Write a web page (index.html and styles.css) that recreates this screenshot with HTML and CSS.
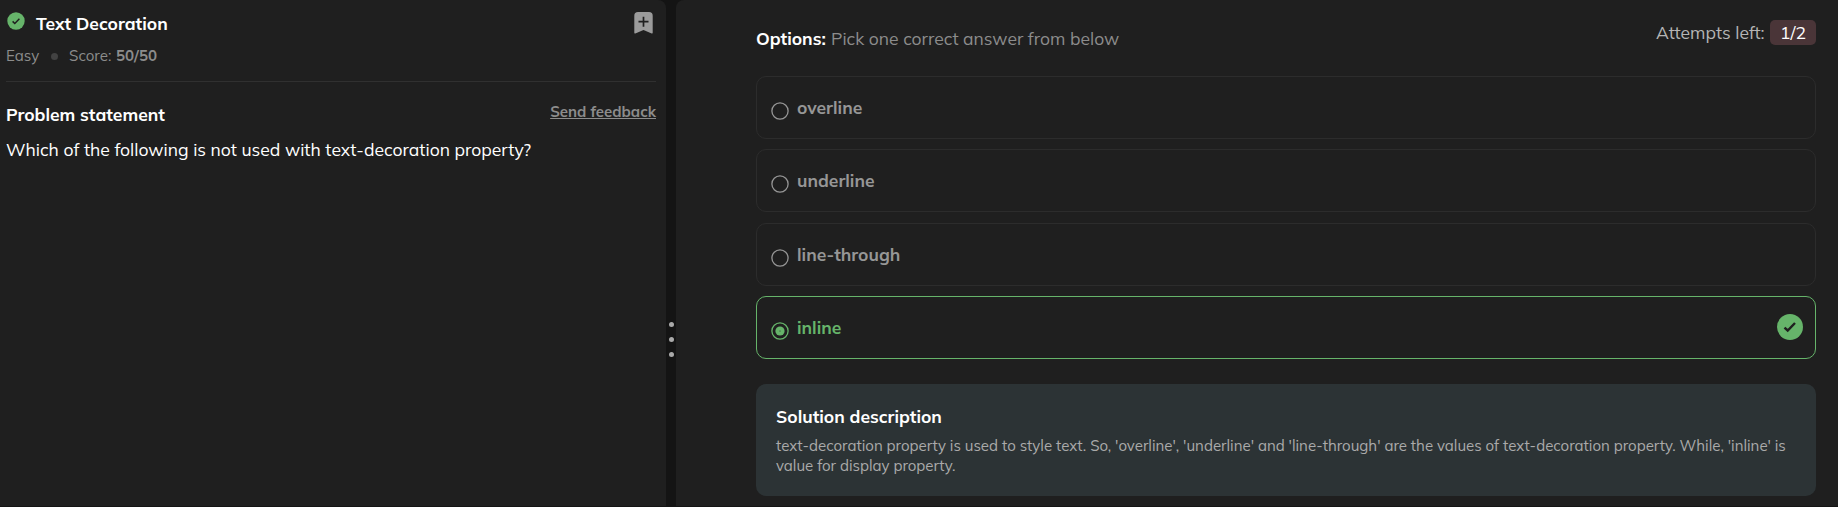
FILE: index.html
```html
<!DOCTYPE html>
<html lang="en">
<head>
<meta charset="utf-8">
<title>Text Decoration</title>
<link rel="stylesheet" href="styles.css">
</head>
<body>
<main class="workspace">
  <section class="problem">
    <header class="problem-head">
      <svg class="solved" viewBox="0 0 18 18"><circle cx="9" cy="9" r="8.7"/><path d="M5.6 9.4l2.2 2.1 4.6-4.7"/></svg>
      <h1 class="title">Text Decoration</h1>
      <svg class="bookmark" viewBox="0 0 19 22"><path class="shape" d="M4 0h11A3.700 3.700 0 0 1 18.700 3.700V20.800q0 1-1 .6L9.500 18 1.300 21.400Q.3 21.800 .3 20.800V3.700A3.700 3.700 0 0 1 4 0z"/><path class="plus" d="M9.500 4.700v10M4.500 9.700h10"/></svg>
    </header>
    <div class="meta"><span class="level">Easy</span><i class="dot"></i><span class="score">Score:</span><b>50/50</b></div>
    <div class="statement-head">
      <h2 class="heading">Problem statement</h2>
      <a class="feedback">Send feedback</a>
    </div>
    <p class="question">Which of the following is not used with text-decoration property?</p>
  </section>
  <div class="splitter"><i></i><i></i><i></i></div>
  <section class="answers">
    <header class="answers-head">
      <div class="prompt"><b class="prompt-label">Options:</b><span class="prompt-hint">Pick one correct answer from below</span></div>
      <div class="attempts"><span class="attempts-label">Attempts left:</span><span class="badge">1/2</span></div>
    </header>
    <div class="options">
      <div class="option"><svg class="radio" viewBox="0 0 18 18"><circle cx="9" cy="9" r="8.100"/></svg><span>overline</span></div>
      <div class="option"><svg class="radio" viewBox="0 0 18 18"><circle cx="9" cy="9" r="8.100"/></svg><span>underline</span></div>
      <div class="option"><svg class="radio" viewBox="0 0 18 18"><circle cx="9" cy="9" r="8.100"/></svg><span>line-through</span></div>
      <div class="option correct"><svg class="radio" viewBox="0 0 18 18"><circle cx="9" cy="9" r="8.100"/><circle class="fill" cx="9" cy="9" r="4.600"/><circle class="pin" cx="9" cy="9" r=".5"/></svg><span>inline</span><svg class="tick" viewBox="0 0 26 26"><circle cx="13" cy="13" r="13"/><path d="M7.500 13.600l3.200 2.900 7.300-7.500"/></svg></div>
    </div>
    <article class="solution">
      <h2 class="heading">Solution description</h2>
      <p class="explain">text-decoration property is used to style text. So, 'overline', 'underline' and 'line-through' are the values of text-decoration property. While, 'inline' is<br>value for display property.</p>
    </article>
  </section>
</main>
</body>
</html>
```

FILE: styles.css
```css
* { box-sizing: border-box; }
body { margin: 0; background: #141414; font-family: Mulish, Muli, Lato, sans-serif; color: #fff; overflow: hidden; }
h1, h2, p { margin: 0; }
svg { display: block; flex: none; }
.workspace { display: flex; width: 1838px; height: 507px; border-bottom: 1px solid #141414; }
.problem { width: 666px; padding: 11px 10px 0 6px; background: #1f1f1f; border-top-right-radius: 8px; }
.problem-head { display: flex; height: 26px; }
.solved { width: 18px; height: 18px; margin: 1px 12px 0 1px; }
.solved circle, .tick circle { fill: #66b46a; }
.solved path { fill: none; stroke: #1f1f1f; stroke-width: 1.500; }
.title, .heading { font-size: 17.500px; font-weight: 700; line-height: 24px; white-space: nowrap; }
.title { flex: 1; margin-left: -1px; }
.bookmark { width: 19px; height: 22px; margin: 1px 3px 0 0; }
.shape { fill: #9b9b9b; }
.plus { fill: none; stroke: #1f1f1f; stroke-width: 1.700; }
.meta { display: flex; align-items: center; height: 45px; padding-bottom: 7px; border-bottom: 1px solid #303030; color: #8c8c8c; font-size: 15.100px; line-height: 20px; white-space: nowrap; }
.level { width: 45px; }
.dot { width: 7px; height: 7px; border-radius: 50%; background: #424242; margin: 1px 11px 0 0; }
.score { width: 47px; }
.statement-head { display: flex; justify-content: space-between; height: 41px; padding: 20px 0 0; }
.feedback { height: 20px; color: #8c8c8c; font-size: 15px; font-weight: 700; line-height: 20px; text-decoration: underline; text-decoration-thickness: 1px; text-underline-offset: 1px; }
.question { padding: 14px 0 0; font-size: 17.550px; line-height: 24px; white-space: nowrap; }
.splitter { display: flex; flex-direction: column; align-items: center; gap: 10px; width: 10px; padding: 321.500px 0 0 1px; }
.splitter i { width: 5px; height: 5px; border-radius: 50%; background: #aaa; }
.answers { flex: 1; padding: 20px 22px 0 80px; background: #1f1f1f; border-top-left-radius: 8px; }
.answers-head { display: flex; justify-content: space-between; height: 56px; white-space: nowrap; }
.prompt { display: flex; padding: 6px 0 0; font-size: 17.500px; line-height: 24px; }
.prompt-label { width: 75px; }
.prompt-hint { color: #8c8c8c; }
.attempts { display: flex; font-size: 17.500px; line-height: 25px; color: #b5b5b5; }
.attempts-label { width: 114px; }
.badge { width: 46px; height: 25px; border-radius: 5px; background: #4a3538; color: #fff; padding-left: 10px; }
.options { display: grid; gap: 10.400px; grid-template-rows: repeat(4, 63px); }
.option { display: flex; align-items: center; border: 1px solid #2c2c2c; border-radius: 10px; padding: 0 12px 0 13.500px; color: #969696; font-size: 17.500px; font-weight: 700; line-height: 24px; }
.option > span { flex: 1; margin-bottom: 1.200px; }
.radio { width: 18px; height: 18px; margin: 6.500px 8.500px 0 0; fill: none; stroke: #969696; stroke-width: 1.300; }
.correct { border-color: #66b46a; color: #66b46a; }
.correct .radio { stroke: #66b46a; }
.radio .fill { fill: #66b46a; stroke: none; }
.radio .pin { fill: #1f1f1f; stroke: none; }
.tick { width: 26px; height: 26px; margin-bottom: 1px; }
.tick path { fill: none; stroke: #1f1f1f; stroke-width: 2.400; }
.solution { height: 112px; margin-top: 25px; padding: 20px 20px; background: #2c3335; border-radius: 10px; }
.explain { padding-top: 8px; color: #aaa; font-size: 15.020px; line-height: 20.200px; white-space: nowrap; }
```
